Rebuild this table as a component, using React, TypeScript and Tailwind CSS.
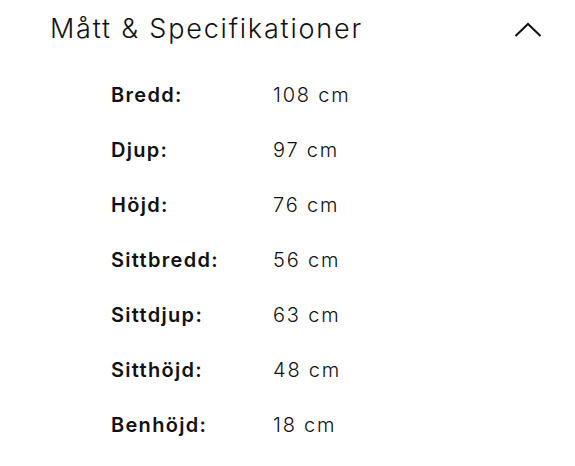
const specs = [
  { label: 'Bredd:', value: '108 cm' },
  { label: 'Djup:', value: '97 cm' },
  { label: 'Höjd:', value: '76 cm' },
  { label: 'Sittbredd:', value: '56 cm' },
  { label: 'Sittdjup:', value: '63 cm' },
  { label: 'Sitthöjd:', value: '48 cm' },
  { label: 'Benhöjd:', value: '18 cm' },
];

export default function App() {
  return (
    <div className="h-[466px] w-[575px] overflow-hidden bg-white font-['Inter',sans-serif] text-[#111]">
      {/* Header */}
      <div className="flex items-center justify-between pl-[50px] pr-[33px] pt-[12px]">
        <h2 className="text-[27px] font-light leading-[34px] tracking-[1.8px]">
          Mått &amp; Specifikationer
        </h2>
        <svg width="28" height="16" viewBox="0 0 28 16" className="mt-[2px] ml-[1px]" fill="none">
          <path d="M1.5 14 L14 2 L26.5 14" stroke="#111" strokeWidth="2" />
        </svg>
      </div>

      {/* Spec rows */}
      <div className="mt-[35px] flex flex-col gap-[27px] pl-[111px]">
        {specs.map((s) => (
          <div key={s.label} className="flex text-[20px] leading-[28px]">
            <span className="w-[162px] font-semibold tracking-[1.3px]">{s.label}</span>
            <span className="font-light tracking-[1.8px]">{s.value}</span>
          </div>
        ))}
      </div>
    </div>
  );
}
